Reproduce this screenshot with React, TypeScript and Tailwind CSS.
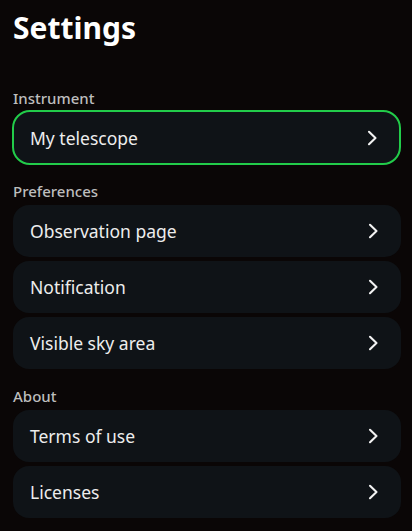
import React from "react";

function Chevron() {
  return (
    <svg width="12" height="16" viewBox="0 0 12 16" fill="none" className="shrink-0">
      <polyline
        points="3,1.8 9.5,8 3,14.2"
        stroke="#f2f2f2"
        strokeWidth="2.1"
        strokeLinecap="round"
        strokeLinejoin="round"
      />
    </svg>
  );
}

function Row({ label, active = false }: { label: string; active?: boolean }) {
  return (
    <div
      className={
        active
          ? "flex h-[55px] items-center justify-between rounded-[18px] border-2 border-[#22cc4a] bg-[#0f1317] pl-[16px] pr-[21px]"
          : "flex h-[52px] items-center justify-between rounded-[16px] bg-[#0f1317] pl-[17px] pr-[22px]"
      }
    >
      <span className="text-[17.5px] leading-[24px] text-[#ededed]">{label}</span>
      <Chevron />
    </div>
  );
}

function Label({ text }: { text: string }) {
  return (
    <div className="pl-[13px] text-[15px] font-medium leading-[20px] text-[#bdbdbd]">{text}</div>
  );
}

export default function App() {
  return (
    <div
      className="min-h-[531px] w-full bg-[#0a0606] pb-3"
      style={{ fontFamily: '"Noto Sans", "Open Sans", sans-serif' }}
    >
      <h1 className="pl-[13px] pt-[9px] text-[30px] font-bold leading-[38px] text-white">Settings</h1>

      <div className="mt-[41px]">
        <Label text="Instrument" />
        <div className="mt-[2px] ml-3 mr-[11px]">
          <Row label="My telescope" active />
        </div>
      </div>

      <div className="mt-4">
        <Label text="Preferences" />
        <div className="mt-1 ml-[13px] mr-[11px] flex flex-col gap-1">
          <Row label="Observation page" />
          <Row label="Notification" />
          <Row label="Visible sky area" />
        </div>
      </div>

      <div className="mt-[17px]">
        <Label text="About" />
        <div className="mt-1 ml-[13px] mr-[11px] flex flex-col gap-1">
          <Row label="Terms of use" />
          <Row label="Licenses" />
        </div>
      </div>
    </div>
  );
}
